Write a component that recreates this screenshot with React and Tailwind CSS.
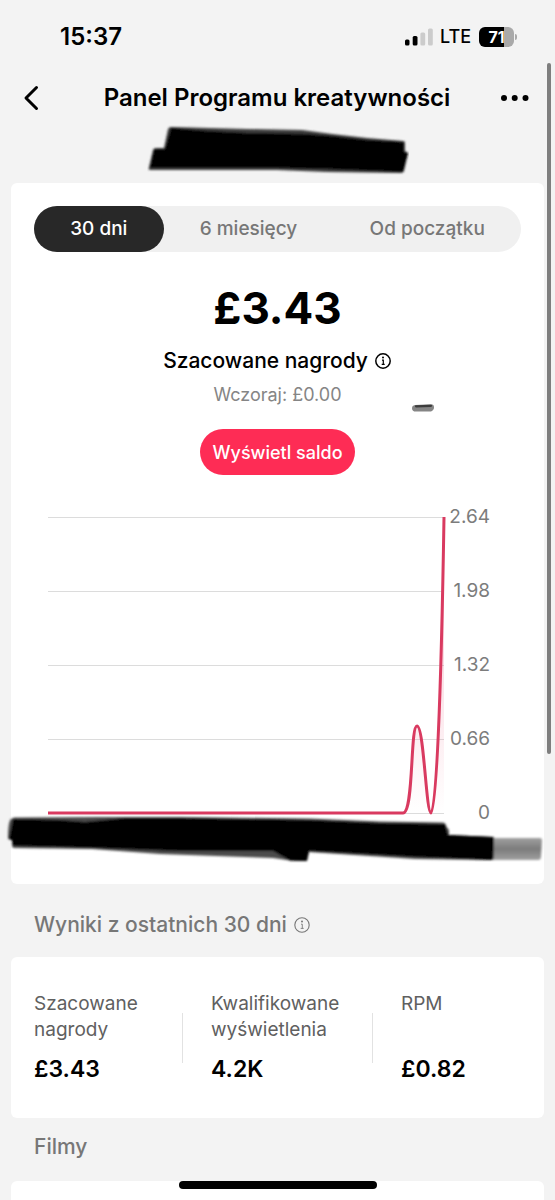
import { useState } from 'react';

const PERIODS = ['30 dni', '6 miesięcy', 'Od początku'];

const AXIS = ['2.64', '1.98', '1.32', '0.66', '0'];

const STATS = [
  { label: 'Szacowane nagrody', value: '£3.43', width: 'w-[148px]' },
  { label: 'Kwalifikowane wyświetlenia', value: '4.2K', width: 'w-[190px] pl-[29px]' },
  { label: 'RPM', value: '£0.82', width: 'flex-1 pl-[29px]' },
];

function InfoIcon({ className, weight = 1.5 }) {
  return (
    <svg viewBox="0 0 18 18" className={className} fill="none" stroke="currentColor" aria-hidden="true">
      <circle cx="9" cy="9" r="7.2" strokeWidth={weight} />
      <path d="M8 8.2h1.3v4.4M7.7 12.4h3" strokeWidth={weight * 0.8} />
      <circle cx="9" cy="5.6" r="1" fill="currentColor" stroke="none" />
    </svg>
  );
}

function StatusBar() {
  return (
    <div className="h-[74px] flex items-center justify-between pl-[60px] pr-[38px]">
      <span className="text-[24px] leading-7 font-semibold">15:37</span>
      <div className="flex items-center">
        <svg viewBox="0 0 28 18" className="w-[28px] h-[18px]" aria-hidden="true">
          <rect x="0" y="11.5" width="4.5" height="6" rx="1.5" />
          <rect x="7.7" y="8" width="4.8" height="9.5" rx="1.5" />
          <rect x="15.4" y="4.5" width="4.8" height="13" rx="1.5" fill="#cbcbcb" />
          <rect x="23" y="0.5" width="4.8" height="17" rx="1.5" fill="#cbcbcb" />
        </svg>
        <span className="ml-[7px] text-[18px] leading-7 font-medium">LTE</span>
        <div className="ml-2 flex items-center">
          <div className="w-[35px] h-[20px] rounded-md bg-[linear-gradient(90deg,#000_71%,#a9a9a9_71%)] text-white text-[16px] leading-5 font-bold text-center">
            71
          </div>
          <div className="ml-px w-[2px] h-[6px] rounded-r-full bg-[#a9a9a9]" />
        </div>
      </div>
    </div>
  );
}

function Header() {
  return (
    <header className="h-12 flex items-center justify-between pl-[22px] pr-[25px]">
      <button aria-label="Wstecz" className="w-[32px]">
        <svg viewBox="0 0 18 26" className="w-[18px] h-[26px]" fill="none" stroke="#000" strokeWidth="3" strokeLinecap="round" strokeLinejoin="round">
          <path d="M14.5 2.5 4 13l10.5 10.5" />
        </svg>
      </button>
      <h1 className="text-[24px] leading-8 font-semibold">Panel Programu kreatywności</h1>
      <button aria-label="Więcej">
        <svg viewBox="0 0 30 8" className="w-[30px] h-[8px]">
          <circle cx="4" cy="4" r="3" />
          <circle cx="14.7" cy="4" r="3" />
          <circle cx="25.5" cy="4" r="3" />
        </svg>
      </button>
    </header>
  );
}

function NameScribble() {
  return (
    <svg viewBox="0 0 262 61" className="block mx-auto w-[262px] h-[61px]" aria-hidden="true">
      <defs>
        <filter id="soft" x="-5%" y="-20%" width="110%" height="140%">
          <feGaussianBlur stdDeviation="0.8" />
        </filter>
      </defs>
      <g filter="url(#soft)">
        <path fill="#3c3c3c" d="M24 5 100 7 155 8 185 12 220 16 256 19Q258 19 258 21V29L261 31 257 49Q256 51 254 51L180 50 130 48H3Q1 48 2 45L6 28Q7 26 9 26H17L21 7Q22 5 24 5z" />
        <path fill="#000" d="M24 6 60 9 100 11 158 12 185 14 220 18 257 20V30L261 31 256 50 180 47 130 46H3L7 27H18z" />
      </g>
    </svg>
  );
}

function DatesScribble() {
  return (
    <svg viewBox="0 0 555 50" preserveAspectRatio="none" className="absolute -inset-x-[11px] top-[302px] w-[calc(100%+22px)] h-[50px] overflow-visible pointer-events-none" aria-hidden="true">
      <defs>
        <linearGradient id="tail" x1="0" x2="0" y1="0" y2="1">
          <stop offset="0" stopColor="#a0a0a0" />
          <stop offset="0.5" stopColor="#7c7c7c" />
          <stop offset="1" stopColor="#a0a0a0" />
        </linearGradient>
      </defs>
      <g filter="url(#soft)">
        <path fill="url(#tail)" d="M490 21H540Q542 21 542 23L541 40Q541 43 538 43H490z" />
        <path fill="#4c4c4c" d="M14 0.500 100 0H180L310 1.500 380 4.500 443 5.500Q446 6 446 9L449 13V18L492 20Q494 20 494 22V40Q494 43 491 43L415 42 309 35 307 42Q307 44 305 44L290 43.500 273 41 160 37 92 32 14 31Q12 31 12 28V23L8 22Q8 4 11 2z" />
        <path fill="#000" d="M13 2 60 3 85 5 105 3 125 1 180 1 310 3 380 6 445 7 448 18 494 20 493 43 415 40 309 34 307 44 290 43.500 273 34 180 34 95 31 60 30 13 29 12 23 9 22z" />
      </g>
    </svg>
  );
}

function RewardsChart() {
  return (
    <div className="relative mt-[40px]">
      <div className="flex pl-[37px] pr-[54px]">
        <svg viewBox="0 0 398 300" preserveAspectRatio="none" className="flex-1 min-w-0 h-[300px]" role="img" aria-label="Szacowane nagrody">
          <defs>
            <linearGradient id="area" x1="0" x2="0" y1="0" y2="1">
              <stop offset="0" stopColor="#e8476f" stopOpacity="0.35" />
              <stop offset="1" stopColor="#e8476f" stopOpacity="0" />
            </linearGradient>
          </defs>
          <path d="M0 2.5h396M0 76.5h396M0 150.5h396M0 224.5h396M0 298.5h396" stroke="#dcdcdc" fill="none" />
          <path fill="url(#area)" d="M355 298C366 298 362 211 369 211S378 298 383 298C388 298 393 190 396 2V298z" />
          <path
            fill="none"
            stroke="#d93a60"
            strokeWidth="3"
            strokeLinejoin="round"
            d="M0 298H355C366 298 362 211 369 211S378 298 383 298C388 298 393 190 396 2"
          />
        </svg>
        <div className="w-[44px] -my-[12px] flex flex-col justify-between text-right text-[19px] leading-7 text-[#7c7c7c]">
          {AXIS.map(v => <span key={v}>{v}</span>)}
        </div>
      </div>
      <DatesScribble />
    </div>
  );
}

export default function App() {
  const [period, setPeriod] = useState(PERIODS[0]);

  return (
    <div className="relative h-screen overflow-hidden flex flex-col bg-[#f3f3f3] text-black font-[Inter,sans-serif]">
      <StatusBar />
      <Header />
      <NameScribble />

      {/* Rewards */}
      <section className="relative mx-[11px] pt-[23px] pb-[69px] rounded-md bg-white">
        <div className="mx-[23px] flex rounded-full bg-[#f0f0f0]">
          {PERIODS.map(p => (
            <button
              key={p}
              onClick={() => setPeriod(p)}
              className={`flex-auto h-[46px] rounded-full text-[19px] font-medium whitespace-nowrap
                ${p === period ? 'bg-[#282828] text-white' : 'text-[#777]'}`}
            >
              {p}
            </button>
          ))}
        </div>

        <div className="mt-[28px] flex flex-col items-center">
          <p className="text-[44px] leading-14 font-bold">£3.43</p>
          <p className="mt-[11px] flex items-center gap-[6px] text-[21px] leading-7 font-medium">
            Szacowane nagrody
            <InfoIcon className="w-[18px] h-[18px]" />
          </p>
          <p className="mt-[6px] text-[18px] leading-7 text-[#858585]">Wczoraj: £0.00</p>
          <button className="mt-[20px] h-[46px] px-[12px] rounded-full bg-[#fe2c55] text-white text-[18px] font-medium">
            Wyświetl saldo
          </button>
        </div>

        <svg viewBox="0 0 24 10" className="absolute right-[109px] top-[220px] w-[24px] h-[10px]" aria-hidden="true">
          <path d="M4 2 20 1.2q3 0 3 3t-3 4.300H5Q1 8.500 1 5.400 1 2.500 4 2z" fill="#858585" />
          <path d="M5 3.300 20 2.800" stroke="#3c3c3c" strokeWidth="2.2" strokeLinecap="round" />
        </svg>

        <RewardsChart />
      </section>

      <h2 className="px-[34px] pt-[27px] pb-[18px] flex items-center gap-[6px] text-[21px] leading-7 font-medium text-[#777]">
        Wyniki z ostatnich 30 dni
        <InfoIcon className="w-[18px] h-[18px]" weight={1.1} />
      </h2>

      {/* Stats */}
      <section className="mx-[11px] px-[23px] pt-[34px] pb-[35px] flex rounded-md bg-white">
        {STATS.map((s, i) => (
          <div key={s.label} className={`relative ${s.width}`}>
            {i > 0 && <span className="absolute left-0 top-[22px] w-px h-[50px] bg-[#e2e2e2]" />}
            <p className="h-[52px] text-[19px] leading-[26px] text-[#606060]">{s.label}</p>
            <p className="mt-[12px] text-[23px] leading-7 font-semibold">{s.value}</p>
          </div>
        ))}
      </section>

      <h2 className="px-[34px] pt-[15px] pb-[20px] text-[21px] leading-7 font-medium text-[#777]">Filmy</h2>
      <section className="mx-[11px] flex-1 rounded-t-md bg-white" />

      {/* Scroll thumb */}
      <div className="absolute right-[4px] top-[63px] w-[4px] h-[691px] rounded-full bg-[#7e7e7e]" />
      {/* Home indicator */}
      <div className="absolute bottom-[11px] left-1/2 -translate-x-1/2 w-[198px] h-[8px] rounded-full bg-black" />
    </div>
  );
}
